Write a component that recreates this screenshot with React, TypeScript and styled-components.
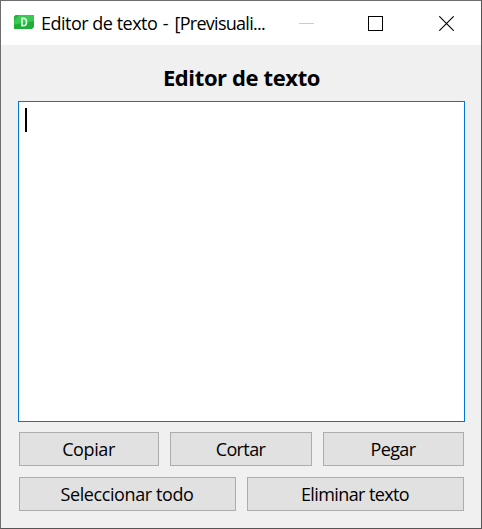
import React from "react";
import styled, { createGlobalStyle } from "styled-components";

const GlobalStyle = createGlobalStyle`
  * { box-sizing: border-box; }
  body { margin: 0; overflow: hidden; }
`;

const Window = styled.main`
  width: 482px;
  height: 529px;
  display: flex;
  flex-direction: column;
  border: 1px solid #555;
  border-top-color: #6e6c6d;
  border-left-color: #6e6c6d;
  background: #f0f0f0;
  color: #000;
  font-family: "Open Sans", "Noto Sans", sans-serif;
  font-size: 18px;
`;

const TitleBar = styled.header`
  height: 44px;
  flex: none;
  display: flex;
  align-items: center;
  background: #fff;
  padding-left: 13px;
`;

const AppIcon = styled.svg`
  width: 20px;
  height: 14px;
  flex: none;
  margin-bottom: 2px;
`;

const Caption = styled.span`
  width: 230px;
  margin-left: 7px;
  white-space: pre;
  line-height: 24px;
  letter-spacing: -0.5px;
`;

const CaptionDash = styled.span`
  letter-spacing: 0.7px;
`;

const CaptionMode = styled.span`
  letter-spacing: -0.73px;
`;

const Controls = styled.div`
  display: flex;
  margin-left: auto;
`;

const Control = styled.button<{ $width: number }>`
  width: ${(p) => p.$width}px;
  height: 44px;
  padding: 0;
  border: 0;
  background: none;
  display: flex;
  align-items: center;
  justify-content: center;
`;

const Body = styled.section`
  flex: 1;
  display: flex;
  flex-direction: column;
  padding: 18px 16px 0 17px;
`;

const Heading = styled.h1`
  margin: 0;
  height: 38px;
  font-size: 22px;
  font-weight: 700;
  line-height: 28px;
  text-align: center;
  letter-spacing: -0.38px;
`;

const TextArea = styled.div`
  height: 321px;
  border: 1px solid #0078d7;
  background: #fff;
  padding: 6px;
`;

const Caret = styled.div`
  width: 2px;
  height: 24px;
  background: #000;
`;

const ButtonRow = styled.div<{ $columns: string; $top: number }>`
  display: grid;
  grid-template-columns: ${(p) => p.$columns};
  column-gap: 11px;
  margin: ${(p) => p.$top}px 1px 0;
`;

const Button = styled.button<{ $spacing: number }>`
  height: 34px;
  padding: 0 1px 1px 0;
  border: 1px solid #adadad;
  background: #e1e1e1;
  color: #000;
  font: inherit;
  line-height: 24px;
  letter-spacing: ${(p) => p.$spacing}px;
  white-space: nowrap;
`;

export default function App() {
  return (
    <>
      <GlobalStyle />
      <Window>
        <TitleBar>
          <AppIcon viewBox="0 0 20 14">
            <path d="M2 0H20V12L18 14H0V2Z" fill="#21ad3a" />
            <path d="M2 0H20V6L0 9.5V2Z" fill="#39c853" />
            <path d="M0 2L2 0H5L0 6Z" fill="#25b03d" />
            <path d="M8 3.3H9.6C11.6 3.3 12.5 4.8 12.5 7S11.6 10.7 9.6 10.7H8Z" fill="none" stroke="#d9f8dd" strokeWidth="1.7" />
          </AppIcon>
          <Caption>
            Editor de texto<CaptionDash> - </CaptionDash>
            <CaptionMode>[Previsuali...</CaptionMode>
          </Caption>
          <Controls>
            <Control aria-label="Minimizar" $width={65}>
              <svg width="15" height="15" shapeRendering="crispEdges">
                <path d="M0 7.5H15" stroke="#ccc" />
              </svg>
            </Control>
            <Control aria-label="Maximizar" $width={73}>
              <svg width="15" height="15" shapeRendering="crispEdges">
                <path d="M.5 .5H14.5V14.5H.5Z" fill="none" stroke="#000" />
              </svg>
            </Control>
            <Control aria-label="Cerrar" $width={69}>
              <svg width="15" height="15">
                <path d="M.3 .3L14.7 14.7M14.7 .3L.3 14.7" stroke="#000" strokeWidth="1.1" />
              </svg>
            </Control>
          </Controls>
        </TitleBar>
        <Body>
          <Heading>Editor de texto</Heading>
          <TextArea role="textbox">
            <Caret />
          </TextArea>
          <ButtonRow $columns="140px 142px 141px" $top={10}>
            <Button $spacing={-0.4}>Copiar</Button>
            <Button $spacing={-0.6}>Cortar</Button>
            <Button $spacing={-0.6}>Pegar</Button>
          </ButtonRow>
          <ButtonRow $columns="217px 217px" $top={11}>
            <Button $spacing={-0.4}>Seleccionar todo</Button>
            <Button $spacing={-0.6}>Eliminar texto</Button>
          </ButtonRow>
        </Body>
      </Window>
    </>
  );
}
